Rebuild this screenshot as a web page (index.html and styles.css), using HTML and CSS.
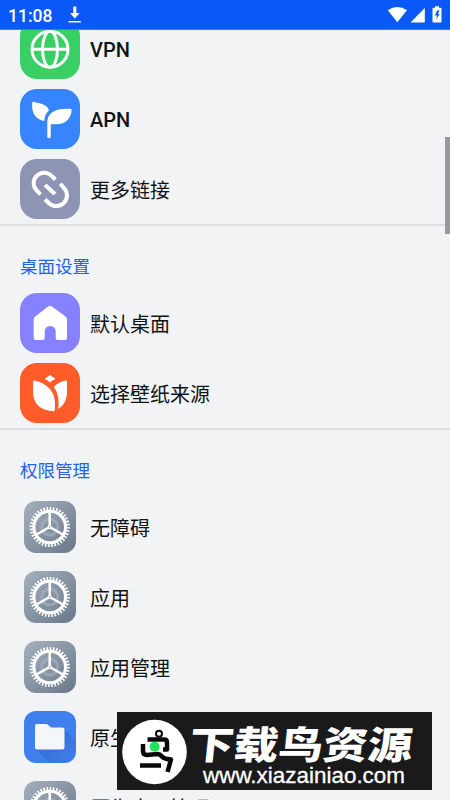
FILE: index.html
```html
<!DOCTYPE html>
<html lang="zh-CN">
<head>
<meta charset="utf-8">
<title>设置</title>
<link rel="stylesheet" href="styles.css">
</head>
<body>
<svg class="defs" width="0" height="0">
  <defs>
    <linearGradient id="steel" x1="0" y1="0" x2="1" y2="1">
      <stop offset="0" stop-color="#a5b0be"/><stop offset="1" stop-color="#697889"/>
    </linearGradient>
    <linearGradient id="shade" x1="0" y1="0" x2="1" y2="1">
      <stop offset="0.45" stop-color="#2e63c2"/><stop offset="1" stop-color="#4080ee"/>
    </linearGradient>
  </defs>
  <symbol id="gear" viewBox="0 0 60 60">
    <rect x="4" y="4" width="52" height="52" rx="12" fill="url(#steel)"/>
    <circle cx="29.7" cy="30" r="8" fill="none" stroke="#b4bfcc" stroke-width="3" opacity=".45"/>
    <circle cx="29.7" cy="30" r="15.8" fill="none" stroke="#fff" stroke-width="3"/>
    <circle cx="29.7" cy="30" r="18.2" fill="none" stroke="#fff" stroke-width="3.8" pathLength="72" stroke-dasharray="1 1"/>
    <path d="M29.7 30V15M29.7 30L16.5 37.5M29.7 30L42.9 37.5" stroke="#fff" stroke-width="2.5"/>
    <circle cx="29.7" cy="30" r="2" fill="#fff"/><circle cx="29.7" cy="30" r=".8" fill="#8b98a8"/>
  </symbol>
</svg>
<div class="screen">
  <header class="status">
    <span class="time">11:08</span>
    <svg class="download" width="14" height="18" viewBox="0 0 14 18"><path d="M5.3 .5h3v6.500h3.400L6.800 12.500 2 7h3.300zM.5 15h12.300v1.600H.5z" fill="#fff"/></svg>
    <svg class="signals" width="60" height="20" viewBox="0 0 60 20" fill="#fff">
      <path d="M.8 5.2Q10 -1 20 5.2L10.3 17.3z"/>
      <path d="M23.5 17.4L37.8 3V17.4z"/>
      <path fill-rule="evenodd" d="M48 1.2h4v1.500h1.500q1 0 1 1V16.400q0 1-1 1h-7q-1 0-1-1V3.700q0-1 1-1h1.500zM50 5.500L48 10.500h2l-1.200 4.500 3.800-6h-1.800l1.800-3.500z"/>
    </svg>
  </header>
  <main class="list">
    <section class="group first">
      <div class="row">
        <svg class="icon" viewBox="0 0 60 60"><rect width="60" height="60" rx="17" fill="#38d064"/><g fill="none" stroke="#fff" stroke-width="3"><circle cx="30" cy="30.300" r="18"/><ellipse cx="30" cy="30.300" rx="7.500" ry="18"/><path d="M12 30.300H48"/></g></svg>
        <span class="label latin">VPN</span>
      </div>
      <div class="row">
        <svg class="icon" viewBox="0 0 60 60"><rect width="60" height="60" rx="17" fill="#3784ff"/><path fill="#fff" d="M12.500 12.500C18 14.500 27 14 29 21.500C26 24.500 24.500 27 24.500 32C16 30.500 10.500 24 12.500 12.500zM51.700 20C51.500 30 45 35.500 36 35.200H30.700V47.800Q30.700 49.300 29 49.300T27.300 47.800V35C26.500 24 35 18.500 51.700 20z"/></svg>
        <span class="label latin">APN</span>
      </div>
      <div class="row">
        <svg class="icon" viewBox="0 0 60 60"><rect width="60" height="60" rx="17" fill="#8e94b3"/><path d="M20.500 35.500L16.800 31.500A10.300 10.300 0 0 1 31.300 16.600L35.500 20.500M40.300 24.800L43.500 28.500A10.500 10.500 0 0 1 29 44.300L25 40.500M25 26L35 35" fill="none" stroke="#fff" stroke-width="4"/></svg>
        <span class="label">更多链接</span>
      </div>
    </section>
    <section class="group">
      <h2 class="heading">桌面设置</h2>
      <div class="row">
        <svg class="icon" viewBox="0 0 60 60"><rect width="60" height="60" rx="17" fill="#8581ff"/><path fill="#fff" d="M28 13.500Q30 12 32 13.500L45.500 23.500Q47 24.700 47 26.500V45Q47 47 45 47H37.500Q35.700 47 35.700 45V38.500A5.500 5.500 0 0 0 24.700 38.500V45Q24.700 47 22.700 47H15.700Q13.700 47 13.700 45V26.500Q13.700 24.700 15.200 23.500z"/></svg>
        <span class="label">默认桌面</span>
      </div>
      <div class="row">
        <svg class="icon" viewBox="0 0 60 60"><rect width="60" height="60" rx="17" fill="#ff5c29"/><path fill="#fff" d="M30 12L35.500 16Q32 17.200 30 19.500Q28 17.200 24.700 16zM13 18.500Q13 17.300 14.500 17.600C29 21 35 30 35 41V46.500Q35 48.300 33 48.200C20 47.500 13 40 13 29zM47 18.500V29C47 37 43.500 42.500 38.200 46C39.500 36 37.500 29 33.800 24Q38 19.500 45.500 17.600Q47 17.300 47 18.500z"/></svg>
        <span class="label">选择壁纸来源</span>
      </div>
    </section>
    <section class="group">
      <h2 class="heading">权限管理</h2>
      <div class="row"><svg class="icon"><use href="#gear"/></svg><span class="label">无障碍</span></div>
      <div class="row"><svg class="icon"><use href="#gear"/></svg><span class="label">应用</span></div>
      <div class="row"><svg class="icon"><use href="#gear"/></svg><span class="label">应用管理</span></div>
      <div class="row">
        <svg class="icon" viewBox="0 0 60 60"><rect x="4" y="4" width="52" height="52" rx="12" fill="#4080ee"/><path d="M44 22L56 34V44Q56 56 44 56H29L16 42z" fill="url(#shade)" opacity=".5"/><path d="M15 19Q15 17 17 17H27L31 20.500H42.500Q44.500 20.500 44.500 22.500V40.500Q44.500 42.500 42.500 42.500H17Q15 42.500 15 40.500z" fill="#f5f6f8"/></svg>
        <span class="label">原生</span>
      </div>
      <div class="row"><svg class="icon"><use href="#gear"/></svg><span class="label">原生应用管理</span></div>
    </section>
  </main>
  <div class="scrollbar"></div>
  <aside class="badge">
    <svg width="315" height="78" viewBox="0 0 315 78">
      <circle cx="37.500" cy="40" r="32.300" fill="#fff"/>
      <g fill="none" stroke="#090909" stroke-width="4.500" stroke-linejoin="round">
        <circle cx="42" cy="21.800" r="3" stroke-width="2"/>
        <path d="M30.500 27.500H47Q50 27.500 50 30.500V37.500H46M26 32V39Q26 43 30 43L40 42Q43 42 45 44.500T54 47.500L50.500 60M23 53.500H44"/>
      </g>
      <circle cx="37.700" cy="34.800" r="5" fill="#24df59"/>
      <text class="brand" transform="translate(71 46.500) skewX(-6) scale(1 .87)" textLength="223" lengthAdjust="spacingAndGlyphs">下载鸟资源</text>
      <text class="url" x="86" y="71" textLength="202" lengthAdjust="spacingAndGlyphs">www.xiazainiao.com</text>
    </svg>
  </aside>
</div>
</body>
</html>
```

FILE: styles.css
```css
* { box-sizing: border-box; }
body { margin: 0; font-family: Roboto, "Noto Sans CJK SC", sans-serif; }
.defs { position: absolute; }
.screen {
  position: relative;
  display: flex;
  flex-direction: column;
  width: 450px;
  height: 800px;
  overflow: hidden;
  background: #f1f3f5;
}
.status {
  flex: none;
  display: flex;
  align-items: center;
  height: 30px;
  padding: 0 6px 0 8px;
  background: #0a59f7;
  color: #fff;
  border-bottom: 1px solid #3a7af8;
}
.time { width: 60px; font-size: 17.500px; font-weight: 500; line-height: 30px; padding-top: 2px; }
.download { margin-top: 1px; }
.signals { margin-left: auto; margin-right: -3px; }
.list { flex: 1; min-height: 0; overflow: hidden; }
.group { border-bottom: 2px solid #dcdee0; }
.first { margin-top: -16px; }
.heading {
  height: 62px;
  margin: 0;
  padding: 26px 20px 0;
  font-size: 17.500px;
  font-weight: 400;
  line-height: 30px;
  color: #2262ee;
}
.row {
  display: flex;
  align-items: center;
  gap: 10px;
  height: 70px;
  padding-left: 20px;
}
.icon { flex: none; width: 60px; height: 60px; }
.label { padding-top: 4px; font-size: 20px; line-height: 30px; color: #111416; white-space: nowrap; }
.latin { font-weight: 500; padding-top: 2px; }
.scrollbar { position: absolute; top: 137px; right: 0; width: 5px; height: 97px; background: #97999d; }
.badge { position: absolute; left: 117px; top: 712px; width: 315px; height: 78px; background: #1a1a1a; }
.badge svg { display: block; }
.brand { font: 900 44px "Noto Sans CJK SC", sans-serif; fill: #fff; }
.url { font: 22px "Liberation Sans", sans-serif; fill: #fff; stroke: #fff; stroke-width: .3px; }
```
